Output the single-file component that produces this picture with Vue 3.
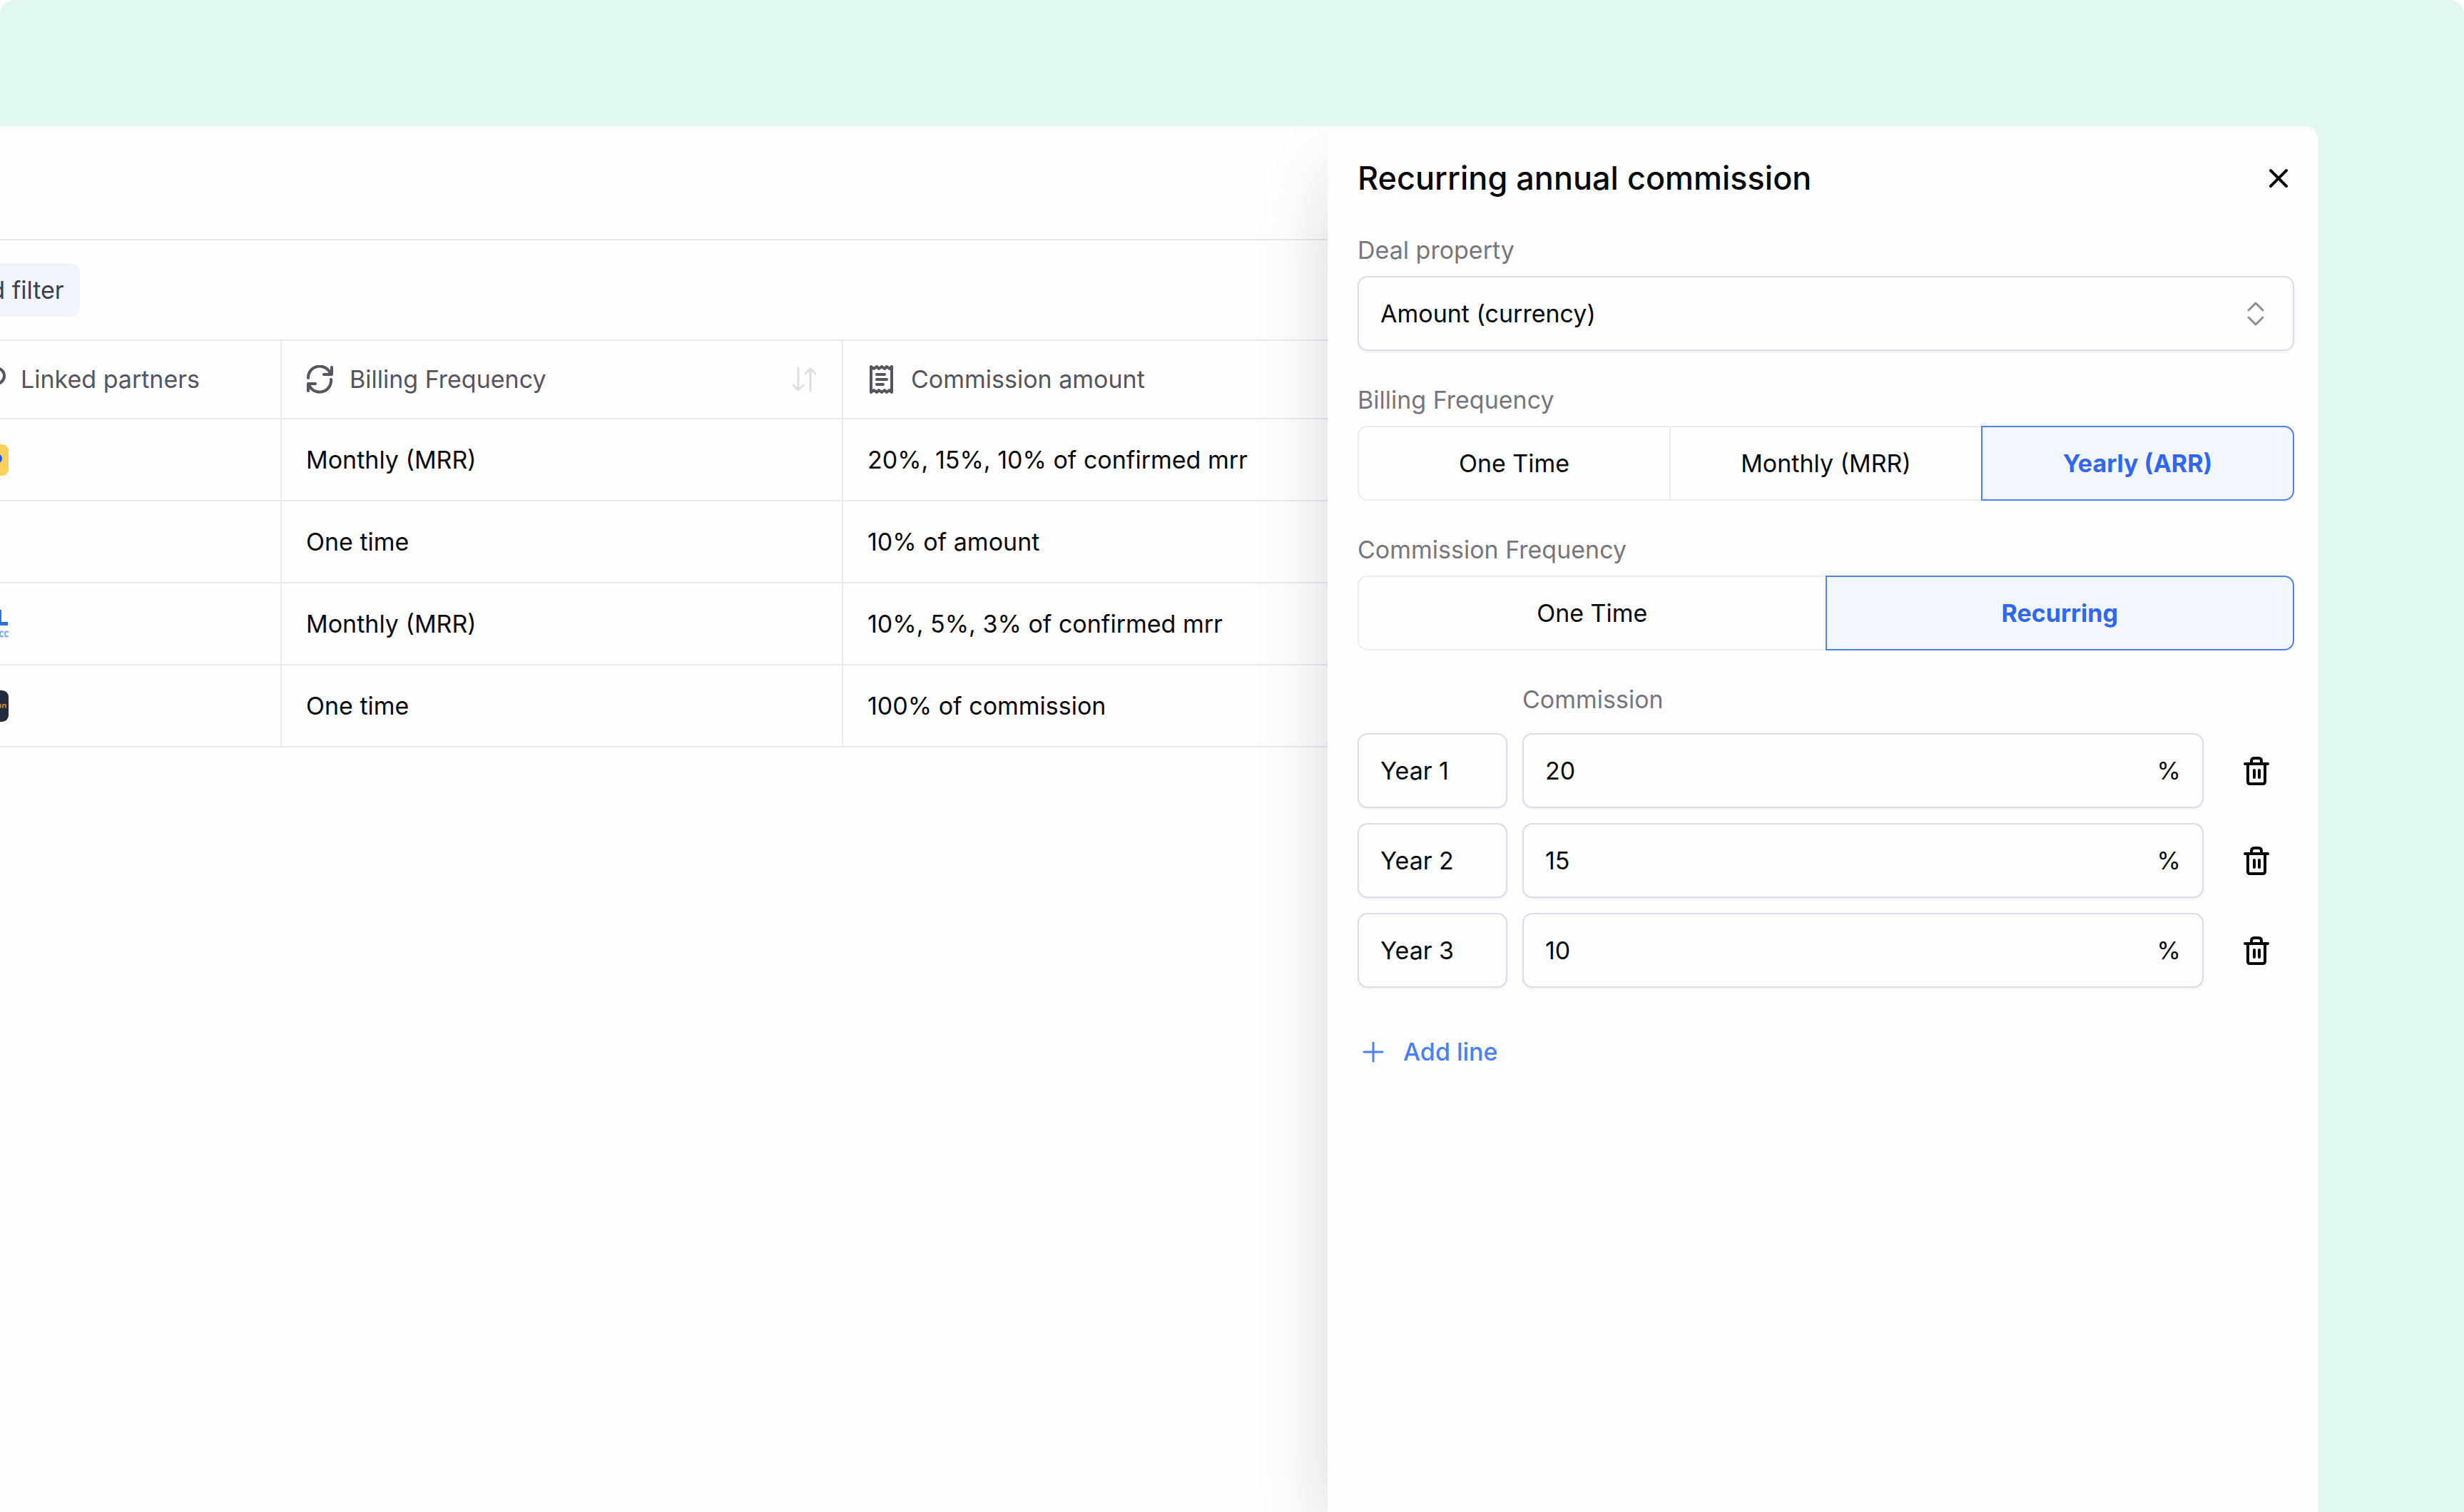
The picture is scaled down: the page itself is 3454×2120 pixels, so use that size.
<template>
  <div class="page">
    <div class="app-window">
      <main class="deals">
        <div class="deals-canvas">
          <div class="title-bar"></div>
          <div class="toolbar">
            <button type="button" class="filter-btn">Add filter</button>
          </div>
          <table class="deals-table">
            <colgroup>
              <col class="col-partners" />
              <col class="col-billing" />
              <col />
            </colgroup>
            <thead>
              <tr>
                <th scope="col">
                  <div class="head-cell">
                    <svg class="head-icon" viewBox="0 0 40 40" aria-hidden="true">
                      <circle cx="27" cy="15" r="11" />
                      <path d="M19 23 6 36M6 30v6h6" />
                    </svg>
                    <span>Linked partners</span>
                  </div>
                </th>
                <th scope="col">
                  <div class="head-cell">
                    <svg class="head-icon" viewBox="0 0 40 40" aria-hidden="true">
                      <path d="M3 18A16 16 0 0 1 34 12M36 3v10H25" />
                      <path d="M35 20A16 16 0 0 1 4 27M3 36V26h10" />
                    </svg>
                    <span>Billing Frequency</span>
                    <button type="button" class="sort-btn" aria-label="Sort by billing frequency">
                      <svg viewBox="0 0 36 36" aria-hidden="true">
                        <path d="M9 2v31M2 26l7 7 7-7M26 34V3M19 10l7-7 7 7" />
                      </svg>
                    </button>
                  </div>
                </th>
                <th scope="col">
                  <div class="head-cell">
                    <svg class="head-icon" viewBox="0 0 40 40" aria-hidden="true">
                      <path d="M5 2l4 3 4-3 3 3 4-3 4 3 3-3 4 3 3-3v36l-3-3-4 3-3-3-4 3-4-3-3 3-4-3-4 3z" />
                      <path d="M13 13h11M13 20h14M13 27h9" />
                    </svg>
                    <span>Commission amount</span>
                  </div>
                </th>
              </tr>
            </thead>
            <tbody>
              <tr v-for="(deal, i) in deals" :key="i">
                <td>
                  <svg v-if="deal.partner === 'sun'" class="avatar" viewBox="0 0 44 44" aria-hidden="true">
                    <rect width="44" height="44" rx="9" fill="#fdcf5b" />
                    <ellipse cx="25" cy="20" rx="10" ry="8" fill="#1f5fd0" />
                  </svg>
                  <svg v-else-if="deal.partner === 'blue'" class="avatar" viewBox="0 0 44 44" aria-hidden="true">
                    <path d="M26 2h8v17h9v5H26z" fill="#2f70d8" />
                    <path d="M36 33q-4-2-4 3t4 3M43 33q-4-2-4 3t4 3" fill="none" stroke="#7ea6e8" stroke-width="2" />
                  </svg>
                  <svg v-else-if="deal.partner === 'night'" class="avatar" viewBox="0 0 44 44" aria-hidden="true">
                    <rect width="44" height="44" rx="9" fill="#232c3e" />
                    <path d="M28 22v2h3v-4h2v4M36 24v-4h4v4" fill="none" stroke="#b97a2a" stroke-width="2" />
                  </svg>
                </td>
                <td>{{ deal.billing }}</td>
                <td>{{ deal.commission }}</td>
              </tr>
            </tbody>
          </table>
        </div>
      </main>

      <aside class="panel">
        <header class="panel-header">
          <h1>Recurring annual commission</h1>
          <button type="button" class="icon-btn" aria-label="Close">
            <svg class="close-icon" viewBox="0 0 44 44" aria-hidden="true">
              <path d="M11 11l22 22M33 11 11 33" />
            </svg>
          </button>
        </header>

        <div class="field">
          <label class="field-label" for="deal-property">Deal property</label>
          <div class="select-wrap">
            <select id="deal-property" v-model="property" class="box">
              <option>Amount (currency)</option>
            </select>
            <svg class="chevrons" viewBox="0 0 40 40" aria-hidden="true">
              <path d="M10 15 20 5l10 10M10 25l10 10 10-10" />
            </svg>
          </div>
        </div>

        <div class="field">
          <span id="billing-label" class="field-label">Billing Frequency</span>
          <div class="segments" role="group" aria-labelledby="billing-label">
            <button
              v-for="option in billingOptions"
              :key="option"
              type="button"
              class="segment"
              :class="{ active: option === billing }"
              :aria-pressed="option === billing"
              @click="billing = option"
            >
              {{ option }}
            </button>
          </div>
        </div>

        <div class="field">
          <span id="frequency-label" class="field-label">Commission Frequency</span>
          <div class="segments" role="group" aria-labelledby="frequency-label">
            <button
              v-for="option in frequencyOptions"
              :key="option"
              type="button"
              class="segment"
              :class="{ active: option === frequency }"
              :aria-pressed="option === frequency"
              @click="frequency = option"
            >
              {{ option }}
            </button>
          </div>
        </div>

        <div class="lines">
          <span id="commission-label" class="field-label lines-label">Commission</span>
          <template v-for="(line, i) in lines" :key="line.id">
            <input v-model="line.name" class="box" type="text" aria-label="Period" />
            <div class="box amount-box">
              <input v-model="line.value" type="text" inputmode="numeric" aria-labelledby="commission-label" />
              <span>%</span>
            </div>
            <button type="button" class="icon-btn" :aria-label="`Delete ${line.name}`" @click="removeLine(i)">
              <svg class="trash-icon" viewBox="0 0 44 44" aria-hidden="true">
                <path d="M6 12h32M10 12v25q0 3 3 3h18q3 0 3-3V12M15 12V8q0-4 4-4h6q4 0 4 4v4" />
                <path d="M19 21v10M26 21v10" />
              </svg>
            </button>
          </template>
        </div>

        <button type="button" class="add-btn" @click="addLine">
          <svg class="plus-icon" viewBox="0 0 40 40" aria-hidden="true">
            <path d="M20 7v26M7 20h26" />
          </svg>
          <span>Add line</span>
        </button>
      </aside>
    </div>
  </div>
</template>

<script setup>
import { ref } from "vue";

const deals = [
  { partner: "sun", billing: "Monthly (MRR)", commission: "20%, 15%, 10% of confirmed mrr" },
  { partner: "", billing: "One time", commission: "10% of amount" },
  { partner: "blue", billing: "Monthly (MRR)", commission: "10%, 5%, 3% of confirmed mrr" },
  { partner: "night", billing: "One time", commission: "100% of commission" },
];

const billingOptions = ["One Time", "Monthly (MRR)", "Yearly (ARR)"];
const frequencyOptions = ["One Time", "Recurring"];

const property = ref("Amount (currency)");
const billing = ref("Yearly (ARR)");
const frequency = ref("Recurring");
const lines = ref([
  { id: 1, name: "Year 1", value: "20" },
  { id: 2, name: "Year 2", value: "15" },
  { id: 3, name: "Year 3", value: "10" },
]);

let nextId = 4;

function addLine() {
  lines.value.push({ id: nextId++, name: `Year ${lines.value.length + 1}`, value: "" });
}

function removeLine(index) {
  lines.value.splice(index, 1);
}
</script>

<style>
body {
  background: #fff;
}
</style>

<style scoped>
* {
  box-sizing: border-box;
}
.page {
  display: flex;
  min-height: 100vh;
  padding: 177px 205px 0 0;
  border-radius: 20px 20px 0 0;
  background: #e1f8f2;
  color: #08080a;
  font-family: Inter, "Liberation Sans", sans-serif;
  font-size: 34px;
  line-height: 52px;
}
button,
input,
select {
  margin: 0;
  padding: 0;
  border: 0;
  background: none;
  color: inherit;
  font: inherit;
}
button {
  cursor: pointer;
}
svg {
  display: block;
  flex: none;
  fill: none;
  stroke-linecap: round;
  stroke-linejoin: round;
}
.app-window {
  display: flex;
  flex: 1;
  overflow: hidden;
  border-radius: 0 18px 0 0;
  background: #fefefe;
}

/* deals list, scrolled sideways behind the panel */
.deals {
  flex: 1;
  min-width: 0;
  overflow: hidden;
}
.deals-canvas {
  margin-left: -100px;
}
.title-bar {
  height: 160px;
  border-bottom: 2px solid #e9e9ed;
}
.toolbar {
  padding: 32px 20px;
  border-bottom: 2px solid #e9e9ed;
}
.filter-btn {
  display: block;
  height: 75px;
  padding: 0 22px;
  border-radius: 12px;
  background: #f2f5fd;
  color: #3f3f4a;
}
.deals-table {
  width: 100%;
  table-layout: fixed;
  border-collapse: separate;
  border-spacing: 0;
}
.col-partners {
  width: 495px;
}
.col-billing {
  width: 787px;
}
.deals-table th,
.deals-table td {
  height: 115px;
  padding: 0 34px;
  border-right: 2px solid #e9e9ed;
  border-bottom: 2px solid #e9e9ed;
  text-align: left;
  white-space: nowrap;
}
.deals-table th {
  height: 110px;
  color: #55545f;
  font-weight: 400;
}
.deals-table th:first-child,
.deals-table td:first-child {
  padding-left: 68px;
}
.deals-table th:last-child,
.deals-table td:last-child {
  border-right: 0;
}
.head-cell {
  display: flex;
  align-items: center;
  gap: 21px;
}
.head-icon {
  width: 40px;
  height: 40px;
  stroke: #55545f;
  stroke-width: 4;
}
.sort-btn {
  margin-left: auto;
}
.sort-btn svg {
  width: 36px;
  height: 36px;
  stroke: #dedee2;
  stroke-width: 3;
}
.avatar {
  width: 44px;
  height: 44px;
}

/* commission panel */
.panel {
  position: relative;
  width: 42.72%;
  padding: 43px 33px 43px 42px;
  background: #fefefe;
  box-shadow: 0 54px 108px -26px rgba(18, 8, 40, 0.25);
}
.panel-header {
  display: flex;
  align-items: center;
  justify-content: space-between;
  margin-bottom: 45px;
}
.panel-header h1 {
  margin: 0;
  font-size: 45px;
  font-weight: 500;
  line-height: 60px;
}
.icon-btn {
  display: flex;
  align-items: center;
  justify-content: center;
}
.close-icon {
  width: 44px;
  height: 44px;
  stroke: #08080a;
  stroke-width: 4;
}
.field {
  margin-bottom: 43px;
}
.field-label {
  display: block;
  margin-bottom: 10px;
  color: #77767e;
}
.box {
  width: 100%;
  height: 105px;
  padding: 0 30px;
  border: 2px solid #d9dde8;
  border-radius: 14px;
  background: #fefefe;
  box-shadow: 0 2px 4px rgba(20, 10, 50, 0.06);
}
.select-wrap {
  display: grid;
  align-items: center;
}
.select-wrap > * {
  grid-area: 1 / 1;
}
.select-wrap select {
  appearance: none;
}
.chevrons {
  width: 40px;
  height: 40px;
  margin-right: 34px;
  justify-self: end;
  stroke: #8e8e92;
  stroke-width: 3;
  pointer-events: none;
}
.segments {
  display: flex;
}
.segment {
  flex: 1;
  height: 105px;
  border: 2px solid #ececf1;
  border-right-width: 0;
}
.segment:first-child {
  border-radius: 14px 0 0 14px;
}
.segment:last-child {
  border-right-width: 2px;
  border-radius: 0 14px 14px 0;
}
.segment.active {
  border: 2px solid #4f80f2;
  background: #f2f6ff;
  color: #3067ee;
  font-weight: 700;
}
.lines {
  display: grid;
  grid-template-columns: 210px 1fr 106px;
  gap: 21px;
}
.lines-label {
  grid-column: 2 / -1;
  margin: 0;
}
.amount-box {
  display: flex;
  align-items: center;
}
.amount-box input {
  flex: 1;
  min-width: 0;
}
.trash-icon {
  width: 44px;
  height: 44px;
  stroke: #08080a;
  stroke-width: 4;
}
.add-btn {
  display: flex;
  align-items: center;
  gap: 22px;
  margin-top: 64px;
  padding: 0 2px;
  color: #4a80f5;
  font-weight: 500;
}
.plus-icon {
  width: 40px;
  height: 40px;
  stroke: #4a80f5;
  stroke-width: 3;
}
</style>
